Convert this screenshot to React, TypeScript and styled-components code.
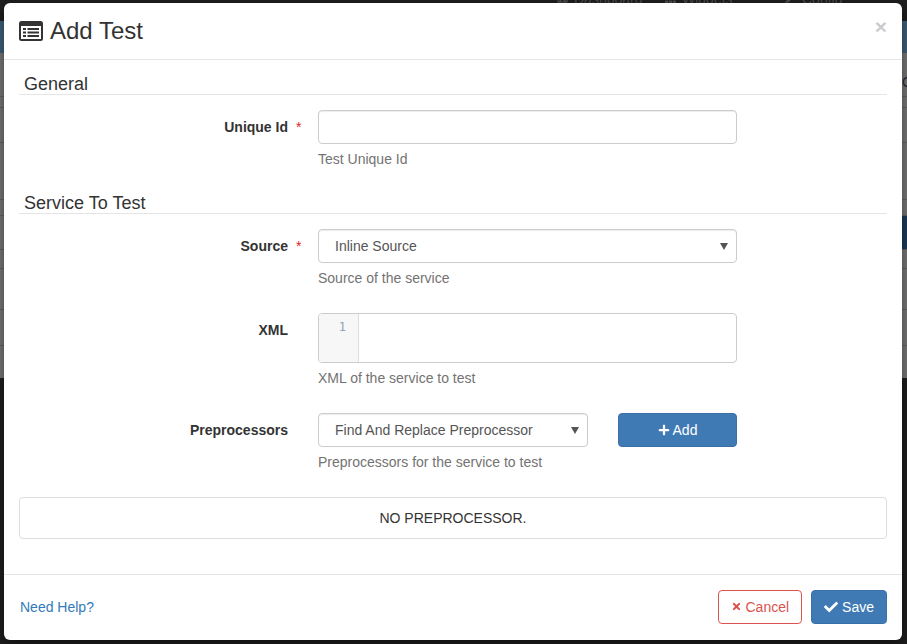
import React, { ReactElement } from 'react'
import styled, { createGlobalStyle } from 'styled-components'
import { FaCheck, FaPlus, FaTachometerAlt, FaTh, FaTimes, FaWrench } from 'react-icons/fa'

const GlobalStyle = createGlobalStyle`
  html, body {
    margin: 0;
    height: 100%;
    overflow: hidden;
    background: #1f1f1f;
    font-family: "Liberation Sans", Arial, sans-serif;
    font-size: 14px;
    line-height: 20px;
    color: #333;
  }
  * { box-sizing: border-box; }
`

const Screen = styled.div`
  position: relative;
  width: 907px;
  height: 644px;
  overflow: hidden;
`

// the dimmed page behind the modal, only its edges show
const Backdrop = styled.div`
  display: flex;
  flex-direction: column;
  height: 378px;
  background: #7a7a7a;
`

const TopNav = styled.nav`
  height: 21px;
  flex: none;
  padding-left: 557px;
  display: flex;
  background: #1f1f1f;
  overflow: hidden;
  color: #4c4c4c;
`

const TopNavItem = styled.span<{ $width: number }>`
  display: flex;
  gap: 6px;
  width: ${(p) => p.$width}px;
  margin-top: -11px;
  svg { margin-top: 4px; font-size: 11px; }
`

const BlueBand = styled.div`
  height: 32px;
  flex: none;
  background: #41627c;
`

const Stripe = styled.div<{ $height: number; $navy?: boolean }>`
  height: ${(p) => p.$height}px;
  flex: none;
  border-bottom: 1px solid #666;
  background: ${(p) =>
    p.$navy ? 'linear-gradient(to right, #7a7a7a 0, #7a7a7a 4px, #1d3c5e 4px)' : 'transparent'};
`

const PeekText = styled.div`
  padding: 19px 0 0 902px;
  color: #2a2a3a;
  white-space: nowrap;
  overflow: hidden;
`

const Overlay = styled.div`
  position: absolute;
  left: 4px;
  top: 3px;
  width: 898px;
  height: 637px;
`

const Modal = styled.div`
  display: flex;
  flex-direction: column;
  height: 100%;
  background: #fff;
  border-radius: 6px;
  box-shadow: 0 5px 15px rgba(0, 0, 0, 0.5);
`

const Header = styled.header`
  display: flex;
  align-items: center;
  justify-content: space-between;
  height: 57px;
  flex: none;
  padding: 0 15px;
  border-bottom: 1px solid #e5e5e5;
`

const Title = styled.h4`
  margin: 0;
  display: flex;
  align-items: center;
  gap: 7px;
  font-size: 24px;
  font-weight: 400;
  line-height: 26px;
`

const Close = styled.span`
  margin: -9px 0 0;
  font-size: 21px;
  font-weight: 700;
  line-height: 1;
  color: #000;
  opacity: 0.2;
  text-shadow: 0 1px 0 #fff;
`

const Body = styled.div`
  flex: 1;
  padding: 14px 15px 0;
`

const Legend = styled.div<{ $top?: number }>`
  margin-top: ${(p) => p.$top ?? 0}px;
  height: 21px;
  padding-left: 5px;
  font-size: 18px;
  line-height: 20px;
  border-bottom: 1px solid #e5e5e5;
`

const FormRow = styled.div<{ $top: number }>`
  display: grid;
  grid-template-columns: 269px 419px;
  column-gap: 30px;
  margin-top: ${(p) => p.$top}px;
`

const Label = styled.label`
  display: flex;
  justify-content: flex-end;
  padding-top: 7px;
  font-weight: 700;
`

const Star = styled.span`
  margin: 0 -13px 0 8px;
  width: 5px;
  font-weight: 400;
  color: #e02222;
`

const TextInput = styled.input`
  display: block;
  width: 100%;
  height: 34px;
  padding: 6px 12px;
  font: inherit;
  color: #555;
  background: #fff;
  border: 1px solid #ccc;
  border-radius: 4px;
  box-shadow: inset 0 1px 1px rgba(0, 0, 0, 0.075);
`

const SelectShell = styled.div`
  position: relative;
  &::after {
    content: '';
    position: absolute;
    right: 9px;
    top: 14px;
    border-style: solid;
    border-width: 7px 4px 0;
    border-color: #555 transparent transparent;
    pointer-events: none;
  }
`

const Select = styled.select`
  display: block;
  width: 100%;
  height: 34px;
  padding: 6px 24px 6px 16px;
  appearance: none;
  font: inherit;
  color: #555;
  background-color: #fff;
  border: 1px solid #ccc;
  border-radius: 4px;
  box-shadow: inset 0 1px 1px rgba(0, 0, 0, 0.075);
`

const Help = styled.div`
  margin-top: 5px;
  color: #737373;
`

const Editor = styled.div`
  display: flex;
  height: 50px;
  border: 1px solid #ccc;
  border-radius: 4px;
  overflow: hidden;
`

const Gutter = styled.div`
  width: 40px;
  flex: none;
  padding: 5px 12px 0 0;
  text-align: right;
  background: #f7f7f7;
  border-right: 1px solid #ddd;
  font-family: "DejaVu Sans Mono", monospace;
  font-size: 12px;
  line-height: 17px;
  color: #93a1b3;
`

const PickerRow = styled.div`
  display: grid;
  grid-template-columns: 270px 119px;
  column-gap: 30px;
`

const Button = styled.button<{ $kind: 'primary' | 'danger'; $iconSize?: number; $gap?: number }>`
  display: inline-flex;
  align-items: center;
  justify-content: center;
  gap: ${(p) => p.$gap ?? 3}px;
  height: 34px;
  padding: 0 12px;
  font: inherit;
  border-radius: 4px;
  border: 1px solid ${(p) => (p.$kind === 'primary' ? '#3a70a8' : '#d9534f')};
  background: ${(p) => (p.$kind === 'primary' ? '#407ab5' : '#fff')};
  color: ${(p) => (p.$kind === 'primary' ? '#fff' : '#d9534f')};
  svg { font-size: ${(p) => p.$iconSize ?? 12}px; }
`

const EmptyPanel = styled.div`
  margin-top: 25px;
  height: 42px;
  display: flex;
  align-items: center;
  justify-content: center;
  border: 1px solid #ddd;
  border-radius: 4px;
`

const Footer = styled.footer`
  display: flex;
  align-items: center;
  justify-content: space-between;
  height: 66px;
  flex: none;
  padding: 0 15px 2px 16px;
  border-top: 1px solid #e5e5e5;
`

const HelpLink = styled.a`
  color: #337ab7;
`

const Actions = styled.div`
  display: flex;
  gap: 9px;
`

function ListAltIcon(): ReactElement {
  return (
    <svg width='24' height='20' viewBox='0 0 24 20' aria-hidden='true'>
      <rect x='0' y='0' width='24' height='20' rx='2.5' fill='#333' />
      <rect x='2' y='5' width='20' height='13' fill='#fff' />
      <g fill='#333'>
        <rect x='4' y='7' width='3' height='2' />
        <rect x='8.5' y='7' width='11.5' height='2' />
        <rect x='4' y='10.5' width='3' height='2' />
        <rect x='8.5' y='10.5' width='11.5' height='2' />
        <rect x='4' y='14' width='3' height='2' />
        <rect x='8.5' y='14' width='11.5' height='2' />
      </g>
    </svg>
  )
}

export default function App(): ReactElement {
  return (
    <Screen>
      <GlobalStyle />
      <Backdrop>
        <TopNav>
          <TopNavItem $width={108}>
            <FaTachometerAlt />
            Dashboard
          </TopNavItem>
          <TopNavItem $width={120}>
            <FaTh />
            Widgets
          </TopNavItem>
          <TopNavItem $width={100}>
            <FaWrench />
            Config
          </TopNavItem>
        </TopNav>
        <BlueBand />
        <Stripe $height={44}>
          <PeekText>C</PeekText>
        </Stripe>
        <Stripe $height={11} />
        <Stripe $height={35} />
        <Stripe $height={57} />
        <Stripe $height={16} />
        <Stripe $height={34} $navy />
        <Stripe $height={19} />
        <Stripe $height={41} />
        <Stripe $height={36} />
      </Backdrop>
      <Overlay>
        <Modal>
          <Header>
            <Title>
              <ListAltIcon />
              Add Test
            </Title>
            <Close>×</Close>
          </Header>
          <Body>
            <Legend>General</Legend>
            <FormRow $top={15}>
              <Label>
                Unique Id<Star>*</Star>
              </Label>
              <div>
                <TextInput />
                <Help>Test Unique Id</Help>
              </div>
            </FormRow>
            <Legend $top={24}>Service To Test</Legend>
            <FormRow $top={15}>
              <Label>
                Source<Star>*</Star>
              </Label>
              <div>
                <SelectShell>
                  <Select defaultValue='inline'>
                    <option value='inline'>Inline Source</option>
                  </Select>
                </SelectShell>
                <Help>Source of the service</Help>
              </div>
            </FormRow>
            <FormRow $top={25}>
              <Label>XML</Label>
              <div>
                <Editor>
                  <Gutter>1</Gutter>
                </Editor>
                <Help>XML of the service to test</Help>
              </div>
            </FormRow>
            <FormRow $top={25}>
              <Label>Preprocessors</Label>
              <div>
                <PickerRow>
                  <SelectShell>
                    <Select defaultValue='far'>
                      <option value='far'>Find And Replace Preprocessor</option>
                    </Select>
                  </SelectShell>
                  <Button $kind='primary'>
                    <FaPlus />
                    Add
                  </Button>
                </PickerRow>
                <Help>Preprocessors for the service to test</Help>
              </div>
            </FormRow>
            <EmptyPanel>NO PREPROCESSOR.</EmptyPanel>
          </Body>
          <Footer>
            <HelpLink>Need Help?</HelpLink>
            <Actions>
              <Button $kind='danger' $iconSize={11}>
                <FaTimes />
                Cancel
              </Button>
              <Button $kind='primary' $iconSize={14} $gap={4}>
                <FaCheck />
                Save
              </Button>
            </Actions>
          </Footer>
        </Modal>
      </Overlay>
    </Screen>
  )
}
